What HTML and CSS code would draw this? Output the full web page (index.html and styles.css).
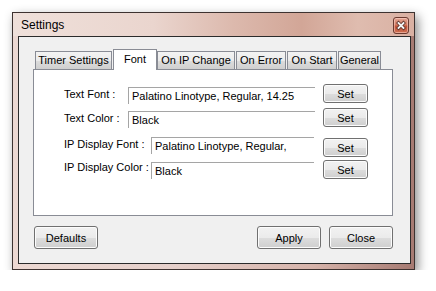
FILE: index.html
```html
<!DOCTYPE html>
<html>
<head>
<meta charset="utf-8">
<link rel="stylesheet" href="styles.css">
</head>
<body>
<div class="window">
  <div class="titlebar">
    <span class="title">Settings</span>
    <div class="close-btn">
      <svg width="14" height="15" viewBox="0 0 14 15">
        <path d="M4.5 5 L9.5 10 M9.5 5 L4.5 10" stroke="#5a3028" stroke-width="3.4" stroke-linecap="square"/>
        <path d="M4.5 5 L9.5 10 M9.5 5 L4.5 10" stroke="#f4f4f4" stroke-width="1.8" stroke-linecap="square"/>
      </svg>
    </div>
  </div>
  <div class="client">
    <div class="tabctl">
      <div class="tabstrip">
        <div class="tab tab-timer">Timer Settings</div>
        <div class="tab tab-font tab-active">Font</div>
        <div class="tab tab-ip">On IP Change</div>
        <div class="tab tab-error">On Error</div>
        <div class="tab tab-start">On Start</div>
        <div class="tab tab-general">General</div>
      </div>
      <div class="panel">
        <div class="group group-a">
          <div class="row">
            <span class="label">Text Font :</span>
            <div class="field">Palatino Linotype, Regular, 14.25</div>
            <button class="btn btn-set">Set</button>
          </div>
          <div class="row">
            <span class="label">Text Color :</span>
            <div class="field">Black</div>
            <button class="btn btn-set">Set</button>
          </div>
        </div>
        <div class="group group-b">
          <div class="row">
            <span class="label">IP Display Font :</span>
            <div class="field field-flush">Palatino Linotype, Regular,</div>
            <button class="btn btn-set btn-drop">Set</button>
          </div>
          <div class="row">
            <span class="label">IP Display Color :</span>
            <div class="field field-low">Black</div>
            <button class="btn btn-set">Set</button>
          </div>
        </div>
      </div>
    </div>
    <div class="actions">
      <button class="btn btn-big">Defaults</button>
      <span class="spacer"></span>
      <button class="btn btn-big">Apply</button>
      <button class="btn btn-big">Close</button>
    </div>
  </div>
</div>
</body>
</html>
```
FILE: styles.css
```css
html, body {
  margin: 0;
  padding: 0;
  background: #ffffff;
}
body {
  font-family: "Liberation Sans", Arial, sans-serif;
  font-size: 11px;
  color: #000;
  padding: 12px 0 0 12px;
}
.window {
  width: 403px;
  height: 258px;
  box-sizing: border-box;
  border: 1px solid #3d3230;
  background: linear-gradient(to right, #ecd8d2 0%, #e6d0cb 40%, #d6b3aa 75%, #a67a72 100%);
  box-shadow: 3px 4px 10px rgba(0, 0, 0, 0.45);
  display: flex;
  flex-direction: column;
  padding: 0 3px 5px 5px;
}
.titlebar {
  height: 23px;
  margin: 0 -3px 0 -5px;
  padding: 0 5px 0 8px;
  display: flex;
  align-items: flex-start;
  background: linear-gradient(to right, #efe0da 0%, #ead5ce 35%, #dcb9ad 55%, #d2a697 72%, #dfbcaf 86%, #d9b0a2 100%);
}
.title {
  font-size: 12px;
  margin-top: 5px;
  color: #000;
  flex: 1;
}
.close-btn {
  width: 16px;
  height: 17px;
  margin-top: 4px;
  box-sizing: border-box;
  border: 1px solid #6a3a30;
  border-radius: 3px;
  background: linear-gradient(to bottom, #e4a897 0%, #d27a62 45%, #bf5238 55%, #cf7052 100%);
  box-shadow: inset 0 0 0 1px rgba(255, 220, 210, 0.5);
  display: flex;
  align-items: center;
  justify-content: center;
}
.close-btn svg {
  display: block;
}
.client {
  flex: 1;
  box-sizing: border-box;
  border: 1px solid #2b2b2b;
  background: #f0f0f0;
  padding: 12px 17px 14px 14px;
  display: flex;
  flex-direction: column;
}
.tabctl {
  display: flex;
  flex-direction: column;
}
.tabstrip {
  display: flex;
  align-items: flex-end;
  height: 21px;
  margin-bottom: -1px;
  padding-left: 2px;
}
.tab {
  box-sizing: border-box;
  height: 18px;
  margin-bottom: 1px;
  margin-right: 1px;
  border: 1px solid #898c95;
  border-bottom: none;
  background: linear-gradient(to bottom, #f3f3f3 0%, #ebebeb 50%, #dddddd 51%, #cfcfcf 100%);
  text-align: center;
  line-height: 17px;
  white-space: nowrap;
}
.tab-active {
  height: 21px;
  margin-bottom: 0;
  background: #ffffff;
  line-height: 18px;
  z-index: 1;
}
.tab-timer { width: 77px; }
.tab-font { width: 44px; margin-right: 0; }
.tab-ip { width: 78px; }
.tab-error { width: 50px; }
.tab-start { width: 50px; }
.tab-general { width: 43px; }
.panel {
  height: 147px;
  box-sizing: border-box;
  border: 1px solid #898c95;
  background: #ffffff;
  padding: 14px 0 0 30px;
}
.group {
  display: flex;
  flex-direction: column;
}
.group-a {
  gap: 4px;
}
.group-b {
  margin-top: 9px;
  gap: 3px;
}
.row {
  display: flex;
  align-items: flex-start;
}
.label {
  flex: none;
  line-height: 13px;
  white-space: nowrap;
}
.group-a .label { width: 64px; margin-top: 4px; }
.group-b .label { width: 87px; margin-top: 1px; }
.field {
  flex: none;
  box-sizing: border-box;
  height: 17px;
  margin-top: 3px;
  border-top: 1px solid #a5a5a5;
  border-left: 1px solid #a5a5a5;
  padding-left: 3px;
  line-height: 16px;
  white-space: nowrap;
  overflow: hidden;
}
.group-a .field { width: 187px; margin-right: 8px; }
.group-b .field { width: 163px; margin-right: 9px; }
.group-b .field-flush { margin-top: 0; }
.group-b .field-low { margin-top: 2px; }
.btn {
  font-family: "Liberation Sans", Arial, sans-serif;
  font-size: 11px;
  color: #000;
  box-sizing: border-box;
  border: 1px solid #707070;
  border-radius: 3px;
  background: linear-gradient(to bottom, #f2f2f2 0%, #ebebeb 50%, #dddddd 51%, #cfcfcf 100%);
  box-shadow: inset 0 0 0 1px #fcfcfc;
  padding: 0;
  margin: 0;
  text-align: center;
}
.btn-set {
  flex: none;
  width: 45px;
  height: 19px;
  line-height: 16px;
}
.btn-drop { margin-top: 1px; }
.actions {
  display: flex;
  margin-top: 10px;
  padding-left: 1px;
  gap: 8px;
}
.spacer { flex: 1; }
.btn-big {
  width: 64px;
  height: 23px;
}
```
